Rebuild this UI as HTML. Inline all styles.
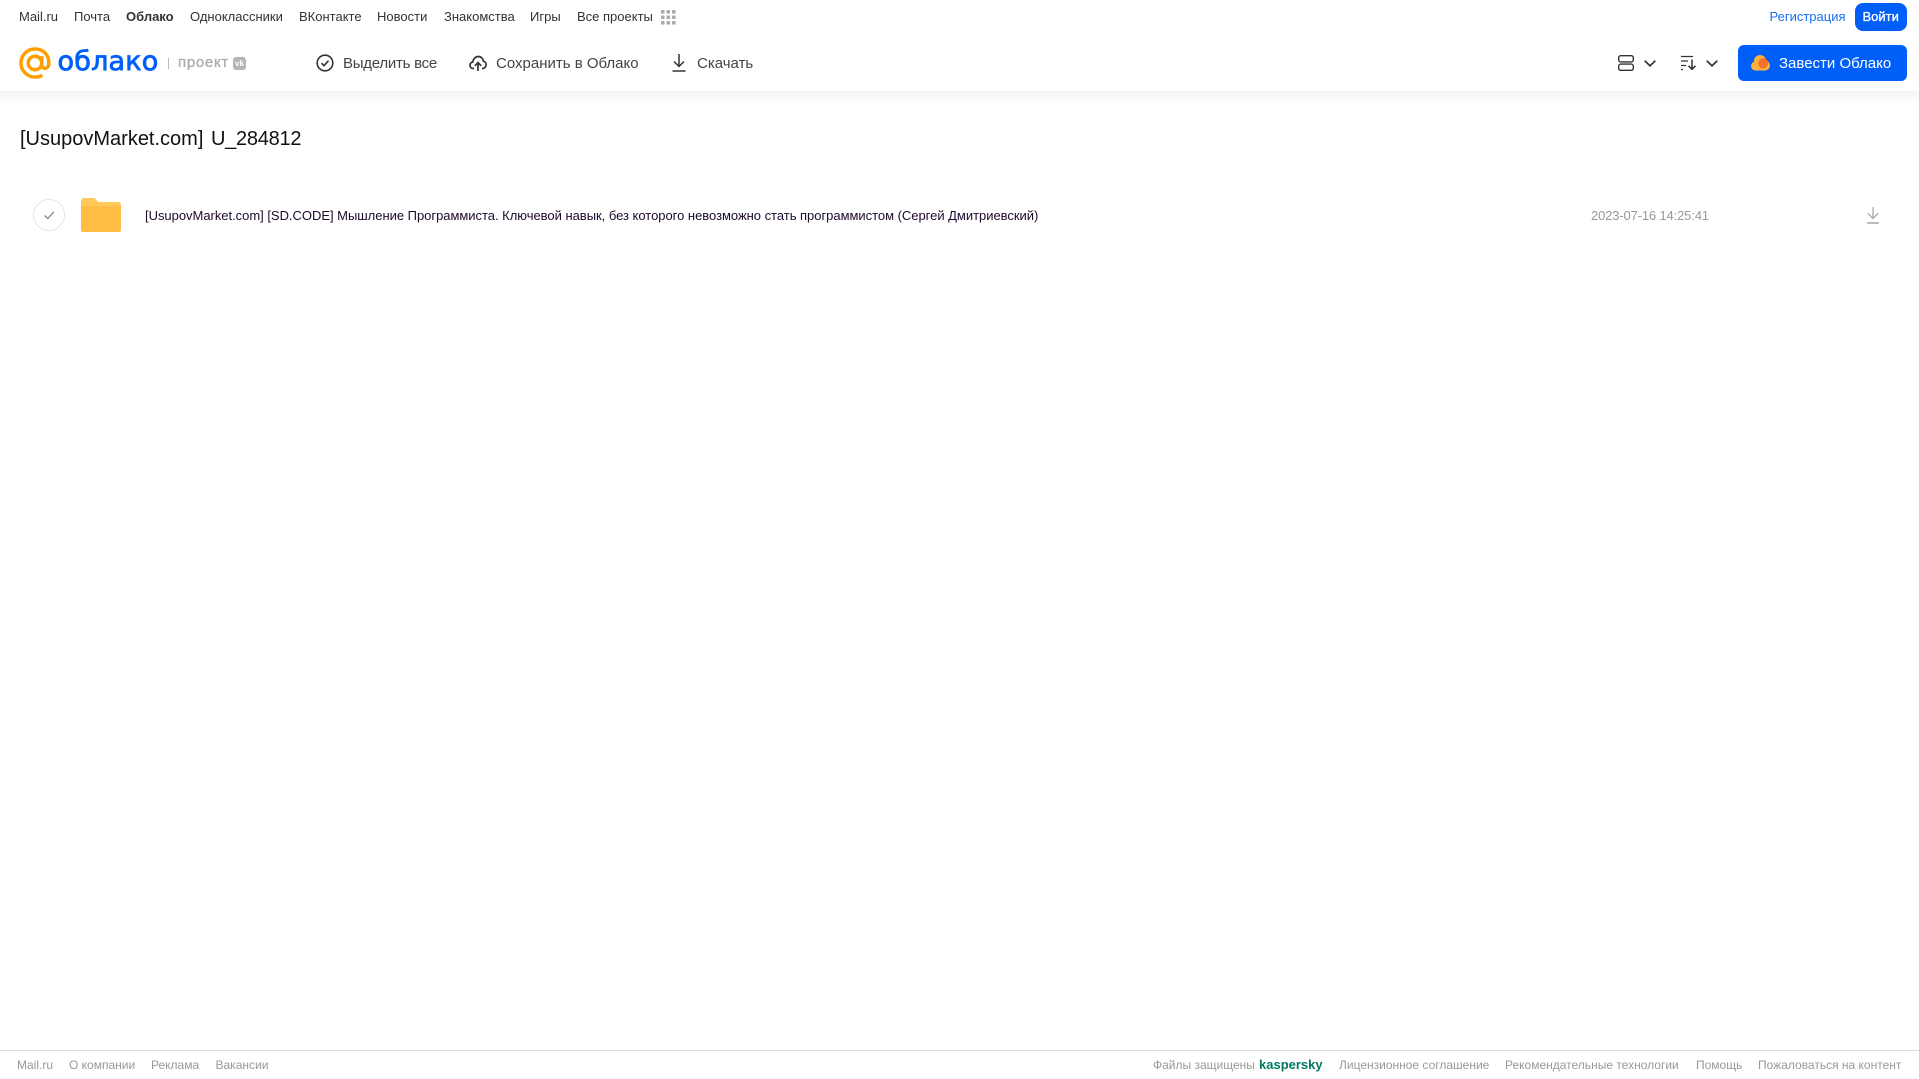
<!DOCTYPE html>
<html lang="ru"><head><meta charset="utf-8"><title>Облако</title>
<style>
*{box-sizing:border-box}
html,body{margin:0;padding:0;width:1919px;height:1079px;overflow:hidden;background:#fff;font-family:"Liberation Sans",sans-serif}
.t{position:absolute;white-space:nowrap;line-height:16px}
.n{font-size:13px;color:#333;top:9px}
.h{font-size:15px;color:#444;top:55.500px}
.f{font-size:12px;color:#999;top:1057px}
svg{position:absolute;overflow:visible}
</style></head><body>
<span class="t n" style="left:19px">Mail.ru</span>
<span class="t n" style="left:74px">Почта</span>
<span class="t n" style="left:126px;font-weight:bold">Облако</span>
<span class="t n" style="left:190px">Одноклассники</span>
<span class="t n" style="left:299px">ВКонтакте</span>
<span class="t n" style="left:377px">Новости</span>
<span class="t n" style="left:444px">Знакомства</span>
<span class="t n" style="left:530px">Игры</span>
<span class="t n" style="left:577px">Все проекты</span>
<svg style="left:661px;top:10px" width="15" height="15" fill="#aaa"><rect width="3.6" height="3.6" rx="1"/><rect x="5.5" width="3.6" height="3.6" rx="1"/><rect x="11" width="3.6" height="3.6" rx="1"/><rect y="5.5" width="3.6" height="3.6" rx="1"/><rect x="5.5" y="5.5" width="3.6" height="3.6" rx="1"/><rect x="11" y="5.5" width="3.6" height="3.6" rx="1"/><rect y="11" width="3.6" height="3.6" rx="1"/><rect x="5.5" y="11" width="3.6" height="3.6" rx="1"/><rect x="11" y="11" width="3.6" height="3.6" rx="1"/></svg>
<span class="t n" style="left:1769.500px;color:#1a6ff0">Регистрация</span>
<div style="position:absolute;left:1855px;top:3px;width:52px;height:28px;border-radius:8px;background:#005ff9"></div>
<span class="t n" style="left:1862.500px;color:#fff;-webkit-text-stroke:.35px #fff">Войти</span>

<div style="position:absolute;left:0;top:91px;width:1919px;height:14px;background:linear-gradient(#f5f5f5,#fff)"></div>

<svg style="left:19px;top:47px" width="32" height="32" viewBox="0 0 33 33" fill="none" stroke="#ff9e00" stroke-width="3.6"><circle cx="16.5" cy="16.5" r="7"/><path d="M23.5 9.5v9c0 5 7 5 7.3-1.500C31.200 8 24.800 2 16.500 2 8.500 2 2 8.500 2 16.500S8.500 31 16.500 31c3 0 5.500-.7 7.500-2"/></svg>
<span class="t" style="left:57.500px;top:46px;font-family:'DejaVu Sans',sans-serif;font-size:27px;line-height:32px;letter-spacing:.2px;color:#005ff9;-webkit-text-stroke:.8px #005ff9">облако</span>
<div style="position:absolute;left:168px;top:58px;width:1px;height:11px;background:#bbb"></div>
<span class="t" style="left:178px;top:55px;font-size:15px;color:#aaa;-webkit-text-stroke:.3px #aaa;letter-spacing:.7px">проект</span>
<div style="position:absolute;left:233px;top:57px;width:13px;height:13px;border-radius:3px;background:#b5b5b5;color:#fff;font:bold 8px/13px 'Liberation Sans',sans-serif;text-align:center">vk</div>

<svg style="left:316px;top:54px" width="18" height="18" viewBox="0 0 18 18" fill="none" stroke="#333" stroke-width="1.600"><circle cx="9" cy="9" r="7.800"/><path d="M5.500 9.200l2.500 2.500 4.500-5"/></svg>
<span class="t h" style="left:343px;letter-spacing:-.25px">Выделить все</span>
<svg style="left:469px;top:54px" width="18" height="18" viewBox="0 0 18 18" fill="none" stroke="#333" stroke-width="1.700"><path d="M5 14.500H4.300C2.300 14.500 1 13 1 11.200c0-1.700 1.200-3 2.800-3.200C4.200 5 6.300 2.500 9.300 2.500c2.800 0 4.800 2.200 5.100 4.700 1.600.3 2.700 1.800 2.700 3.400 0 2.100-1.500 3.900-3.600 3.900H13"/><path d="M9 17V9M5.800 11.800L9 8.600l3.200 3.200"/></svg>
<span class="t h" style="left:496px">Сохранить в Облако</span>
<svg style="left:671px;top:54px" width="16" height="18" viewBox="0 0 16 18" fill="none" stroke="#333" stroke-width="1.500"><path d="M8 0v12M3 7.500l5 5 5-5"/><path d="M1.500 17h13"/></svg>
<span class="t h" style="left:697px">Скачать</span>

<svg style="left:1618px;top:55px" width="16" height="16" viewBox="0 0 16 16" fill="none" stroke="#333" stroke-width="1.400"><rect x=".7" y=".7" width="14.600" height="6.200" rx="2"/><rect x=".7" y="9.100" width="14.600" height="6.200" rx="2"/></svg>
<svg style="left:1644px;top:60px" width="12" height="7" fill="none" stroke="#333" stroke-width="1.700"><path d="M.7.800L6 5.800l5.300-5"/></svg>
<svg style="left:1681px;top:55px" width="16" height="16" viewBox="0 0 16 16" fill="none" stroke="#333" stroke-width="1.200"><path d="M0 1.500h12M0 6h7M0 10.500h5M0 14.500h2"/><path d="M11 4.500V14M7.500 10.800L11 14.300l3.500-3.500" stroke-width="1.500"/></svg>
<svg style="left:1706px;top:60px" width="12" height="7" fill="none" stroke="#333" stroke-width="1.700"><path d="M.7.800L6 5.800l5.300-5"/></svg>

<div style="position:absolute;left:1738px;top:45px;width:169px;height:36px;border-radius:6px;background:#005ff9"></div>
<svg style="left:1751px;top:55px" width="19" height="16" viewBox="0 0 19 16"><g fill="#ffb13d"><circle cx="4.500" cy="11" r="4.500"/><circle cx="9" cy="6" r="6"/><circle cx="14" cy="10.500" r="5"/><rect x="4" y="9" width="10" height="6.500"/></g><circle cx="12.300" cy="8.300" r="5" fill="#f4712a"/></svg>
<span class="t h" style="left:1779px;color:#fff">Завести Облако</span>

<span class="t" style="left:20px;top:126.500px;font-size:20px;line-height:24px;color:#111;word-spacing:2px">[UsupovMarket.com] <span style="letter-spacing:-.25px">U_284812</span></span>

<div style="position:absolute;left:33px;top:199px;width:32px;height:32px;border-radius:50%;border:1px solid #e6e6e6"></div>
<svg style="left:44px;top:211px" width="11" height="9" fill="none" stroke="#888" stroke-width="1.300"><path d="M.8 4.500l3 3L10 .8"/></svg>
<svg style="left:81px;top:198px" width="40" height="34" viewBox="0 0 40 34"><path d="M0 3a3 3 0 013-3h8c3 0 4 1 5 2.500S18 4 20 4h17a3 3 0 013 3v4H0z" fill="#ffc95c"/><path d="M0 8h40v24a2 2 0 01-2 2H2a2 2 0 01-2-2z" fill="#ffbd45"/></svg>
<span class="t" style="left:145px;top:207.500px;font-size:13px;letter-spacing:-.025px;color:#1d0a2c">[UsupovMarket.com] [SD.CODE] Мышление Программиста. Ключевой навык, без которого невозможно стать программистом (Сергей Дмитриевский)</span>
<span class="t" style="left:1591px;top:207.500px;font-size:13px;letter-spacing:-.15px;color:#999">2023-07-16 14:25:41</span>
<svg style="left:1866px;top:207px" width="14" height="17" viewBox="0 0 14 17" fill="none" stroke="#aaa" stroke-width="1.300"><path d="M7 0v11M2 6.500l5 5 5-5"/><path d="M1 16h12" stroke-width="1.600"/></svg>

<div style="position:absolute;left:0;top:1050px;width:1919px;height:1px;background:#ddd"></div>
<span class="t f" style="left:17px">Mail.ru</span>
<span class="t f" style="left:69px">О компании</span>
<span class="t f" style="left:151px">Реклама</span>
<span class="t f" style="left:215.500px">Вакансии</span>
<span class="t f" style="left:1153px">Файлы защищены</span>
<span class="t f" style="left:1259px;font-size:13px;font-weight:bold;color:#007a63">kaspersky</span>
<span class="t f" style="left:1339px">Лицензионное соглашение</span>
<span class="t f" style="left:1505px">Рекомендательные технологии</span>
<span class="t f" style="left:1696px">Помощь</span>
<span class="t f" style="left:1758px">Пожаловаться на контент</span>
</body></html>
